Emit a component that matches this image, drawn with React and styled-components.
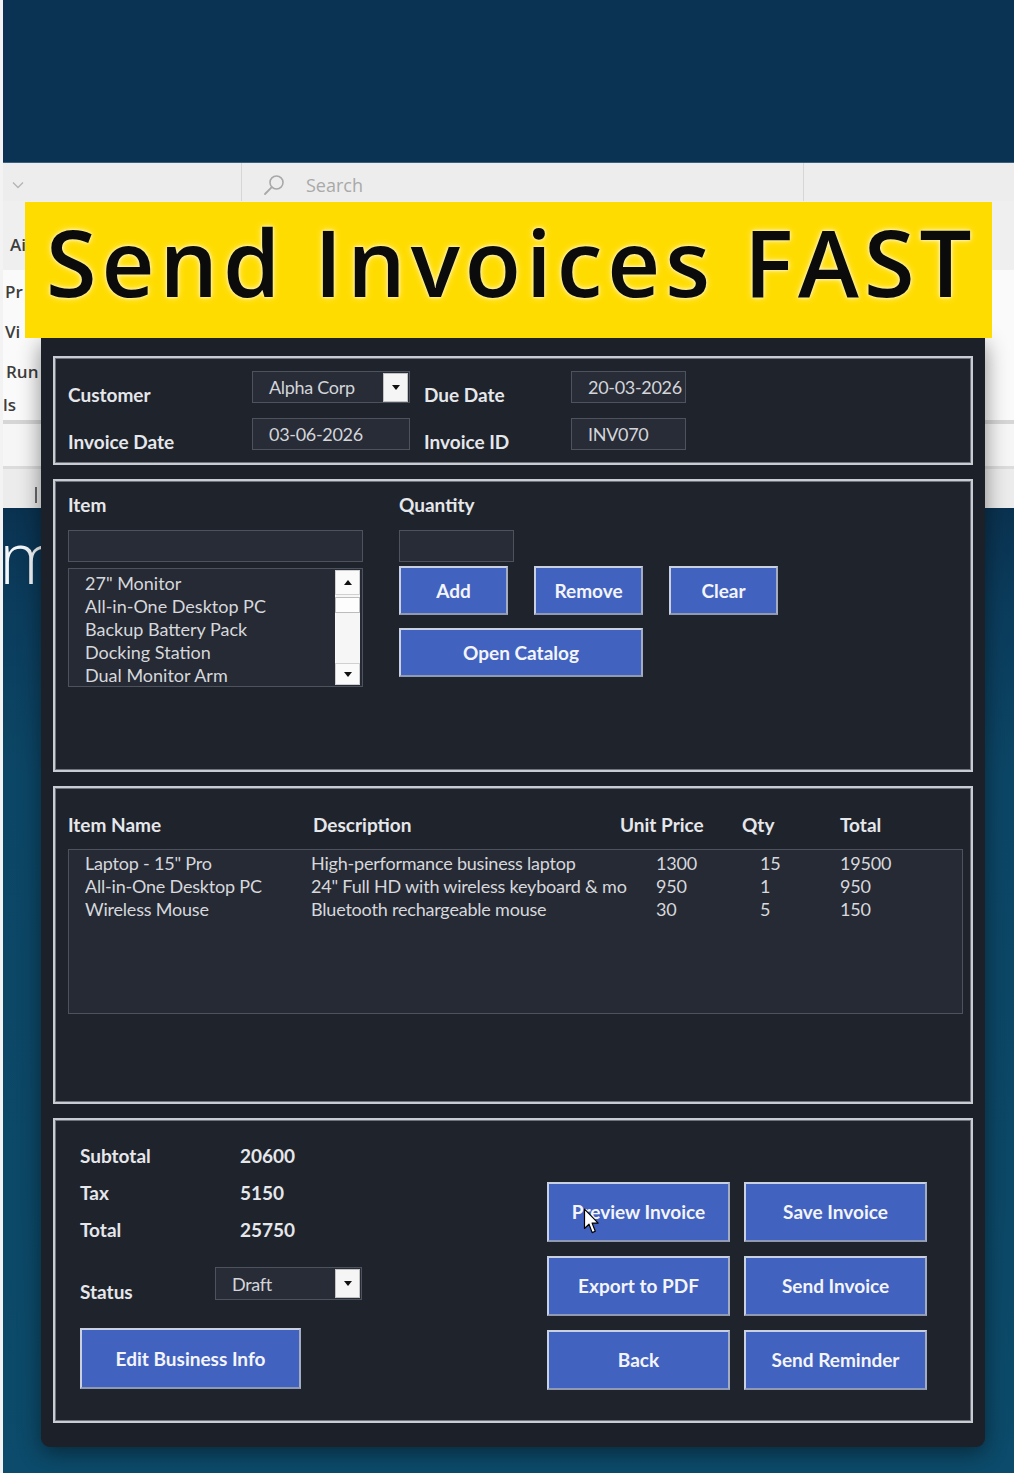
import React from "react";
import styled, { createGlobalStyle } from "styled-components";

const GlobalStyle = createGlobalStyle`
  html, body { margin: 0; padding: 0; background: #0a3252; }
  body { font-family: "Lato", "Open Sans", sans-serif; }
  *, *::before, *::after { box-sizing: border-box; }
`;

/* ---------- desktop backdrop ---------- */

const Screen = styled.div`
  width: 1014px;
  height: 1473px;
  overflow: hidden;
  display: flex;
  flex-direction: column;
  border-left: 3px solid #f3f3f3;
  background: #0b3a5a;
`;

const TopBand = styled.div`
  flex: none;
  height: 163px;
  background: #0a3252;
  border-bottom: 1px solid #3a6080;
`;

const Desk = styled.div`
  position: relative;
  flex: 1;
  display: flex;
  flex-direction: column;
`;

const Toolbar = styled.div`
  flex: none;
  height: 38px;
  display: flex;
  background: #ededed;
`;

const ToolCell = styled.div`
  flex: ${(p) => (p.$w ? "none" : "1")};
  width: ${(p) => (p.$w ? `${p.$w}px` : "auto")};
  display: flex;
  align-items: center;
  gap: 21px;
  padding: 5px 0 0 ${(p) => p.$pad || 0}px;
  border-right: ${(p) => (p.$w ? "1px solid #d6d6d6" : "none")};
`;

const SearchText = styled.span`
  font: 400 18px "Open Sans", sans-serif;
  color: #a9a9a9;
`;

const Band = styled.div`
  flex: none;
  height: ${(p) => p.$h}px;
  background: ${(p) => p.$bg};
  display: flex;
  flex-direction: column;
  align-items: flex-start;
`;

const RibbonLabel = styled.span`
  display: block;
  margin-top: ${(p) => p.$gap || 0}px;
  margin-left: ${(p) => p.$x || 0}px;
  font: 600 17px/22px "Open Sans", sans-serif;
  color: #3d3d3d;
`;

const Tick = styled.span`
  display: block;
  width: 2px;
  height: 16px;
  background: #6a6a6a;
  margin: 18px 0 0 32px;
`;

const Harbor = styled.div`
  flex: 1;
  background: linear-gradient(
    180deg,
    #0a3250 0%,
    #0b3c5c 10%,
    #0c4666 28%,
    #0c4867 70%,
    #0c4b6b 100%
  );
`;

const BigGlyph = styled.span`
  display: block;
  margin: 12px 0 0 -4px;
  font: 300 72px/72px "Open Sans", sans-serif;
  color: #f4f6f8;
`;

/* ---------- headline ribbon ---------- */

const Banner = styled.div`
  position: absolute;
  left: 22px;
  top: 39px;
  width: 967px;
  height: 136px;
  z-index: 3;
  background: #ffdc00;
  padding: 14px 0 0 21px;
  font: 600 92px/92px "Open Sans", sans-serif;
  letter-spacing: 5px;
  color: #0b0b0b;
  white-space: nowrap;
  text-shadow: 0 0 6px #fff6b8, 0 0 3px #fffbe0;
`;

/* ---------- invoice window ---------- */

const AppWindow = styled.div`
  position: absolute;
  left: 38px;
  top: 175px;
  width: 944px;
  height: 1109px;
  z-index: 2;
  background: #1c2029;
  border-radius: 0 0 9px 9px;
  box-shadow: 0 6px 22px rgba(0, 0, 0, 0.45);
  padding: 18px 12px 0 12px;
  display: flex;
  flex-direction: column;
  gap: 14px;
`;

const Panel = styled.section`
  flex: none;
  height: ${(p) => p.$h}px;
  border: 2px solid #c9cdd3;
  box-shadow: inset 0 0 0 1px #6e737c;
  background: #1f232c;
  padding: ${(p) => p.$pad};
`;

const HeaderGrid = styled.div`
  display: grid;
  grid-template-columns: 184px 172px 147px 115px;
  grid-template-rows: 32px 32px;
  row-gap: 15px;
`;

const FieldLabel = styled.span`
  align-self: end;
  margin-bottom: -3px;
  font: 700 19px/22px "Lato", sans-serif;
  color: #e5e7eb;
  white-space: nowrap;
`;

const Field = styled.div`
  width: ${(p) => p.$w}px;
  height: ${(p) => p.$h || 32}px;
  margin-top: ${(p) => p.$mt || 0}px;
  display: flex;
  align-items: center;
  justify-content: space-between;
  border: 1px solid #4d525d;
  background: #282c37;
  padding-left: 16px;
  font: 400 18px/22px "Lato", sans-serif;
  letter-spacing: -0.3px;
  color: #d3d5da;
  white-space: nowrap;
  overflow: hidden;
`;

const DropBtn = styled.span`
  width: 25px;
  height: 29px;
  margin-right: 1px;
  flex: none;
  display: flex;
  align-items: center;
  justify-content: center;
  background: #f5f5f5;
  border: 1px solid #c2c2c2;

  &::after {
    content: "";
    border-left: 4px solid transparent;
    border-right: 4px solid transparent;
    border-top: 5px solid #111;
  }
`;

const EntryArea = styled.div`
  display: flex;
  gap: 36px;
`;

const EntryCol = styled.div`
  display: flex;
  flex-direction: column;
  align-items: flex-start;
  width: ${(p) => (p.$w ? `${p.$w}px` : "auto")};
`;

const SectionLabel = styled.span`
  font: 700 19px/22px "Lato", sans-serif;
  color: #e5e7eb;
  white-space: nowrap;
`;

const ListBox = styled.div`
  margin-top: 6px;
  width: 295px;
  height: 119px;
  border: 1px solid #4d525d;
  background: #262a34;
  display: flex;
`;

const ListItems = styled.div`
  flex: 1;
  padding: 3px 0 0 16px;
  font: 400 18px/23px "Lato", sans-serif;
  color: #d6d8dc;
  overflow: hidden;
  white-space: nowrap;
`;

const ScrollBar = styled.div`
  flex: none;
  width: 25px;
  margin: 1px 2px 1px 0;
  display: flex;
  flex-direction: column;
  background: #f6f6f6;
`;

const ScrollArrow = styled.span`
  flex: none;
  height: ${(p) => p.$h}px;
  display: flex;
  align-items: center;
  justify-content: center;
  background: #fafafa;
  border: 1px solid #d0d0d0;

  &::after {
    content: "";
    border-left: 4px solid transparent;
    border-right: 4px solid transparent;
    ${(p) =>
      p.$up ? "border-bottom: 5px solid #111;" : "border-top: 5px solid #111;"}
  }
`;

const ScrollThumb = styled.span`
  flex: none;
  height: 16px;
  margin-top: 2px;
  background: #fdfdfd;
  border: 1px solid #bcbcbc;
`;

const ScrollTrack = styled.span`
  flex: 1;
`;

const ButtonRow = styled.div`
  display: flex;
  gap: ${(p) => p.$gap || 26}px;
  margin-top: ${(p) => p.$mt || 0}px;
`;

const ActionButton = styled.button`
  position: relative;
  width: ${(p) => p.$w}px;
  height: ${(p) => p.$h}px;
  margin-top: ${(p) => p.$mt || 0}px;
  padding: 0;
  background: #4262c0;
  border: 2px solid #c9d0e2;
  border-right-color: #a4acc2;
  border-bottom-color: #9099b2;
  color: #f3f5fb;
  font: 700 19px/22px "Lato", sans-serif;
  white-space: nowrap;
  cursor: default;
`;

const Pointer = styled.svg`
  position: absolute;
  left: 34px;
  top: 24px;
`;

const ColumnHeads = styled.div`
  display: grid;
  grid-template-columns: 245px 307px 122px 98px 1fr;
`;

const HeadCell = styled.span`
  font: 700 19px/22px "Lato", sans-serif;
  color: #e5e7eb;
  white-space: nowrap;
`;

const GridBox = styled.div`
  margin-top: 13px;
  width: 895px;
  height: 165px;
  border: 1px solid #4d525d;
  background: #262a35;
  padding: 2px 0 0 16px;
`;

const DataRow = styled.div`
  display: grid;
  grid-template-columns: 226px 345px 104px 80px 1fr;
  height: 23px;
`;

const DataCell = styled.span`
  font: 400 18px/23px "Lato", sans-serif;
  letter-spacing: -0.2px;
  color: #d6d8dc;
  white-space: nowrap;
  overflow: hidden;
`;

const SummaryLayout = styled.div`
  display: flex;
  align-items: flex-start;
`;

const SummaryCol = styled.div`
  flex: none;
  width: 467px;
  display: flex;
  flex-direction: column;
  align-items: flex-start;
`;

const SumRow = styled.div`
  display: grid;
  grid-template-columns: 160px auto;
  height: 37px;
  align-items: center;
`;

const SumText = styled.span`
  font: 700 19px/22px "Lato", sans-serif;
  color: #e5e7eb;
`;

const StatusRow = styled.div`
  margin-top: 19px;
  display: grid;
  grid-template-columns: 135px auto;
  height: 33px;
`;

const ActionGrid = styled.div`
  margin-top: 45px;
  display: grid;
  grid-template-columns: repeat(2, 183px);
  grid-auto-rows: 60px;
  gap: 14px;
`;

/* ---------- data ---------- */

const catalog = [
  '27" Monitor',
  "All-in-One Desktop PC",
  "Backup Battery Pack",
  "Docking Station",
  "Dual Monitor Arm",
];

const lines = [
  ['Laptop - 15" Pro', "High-performance business laptop", "1300", "15", "19500"],
  ["All-in-One Desktop PC", '24" Full HD with wireless keyboard & mo', "950", "1", "950"],
  ["Wireless Mouse", "Bluetooth rechargeable mouse", "30", "5", "150"],
];

const totals = [
  ["Subtotal", "20600"],
  ["Tax", "5150"],
  ["Total", "25750"],
];

const actions = [
  "Preview Invoice",
  "Save Invoice",
  "Export to PDF",
  "Send Invoice",
  "Back",
  "Send Reminder",
];

/* ---------- icons ---------- */

const Chevron = () => (
  <svg width="12" height="8" viewBox="0 0 12 8">
    <polyline points="1,1.5 6,6.5 11,1.5" fill="none" stroke="#b5b5b5" strokeWidth="1.4" />
  </svg>
);

const Magnifier = () => (
  <svg width="22" height="22" viewBox="0 0 22 22">
    <circle cx="13.5" cy="8.5" r="6.5" fill="none" stroke="#a8a8a8" strokeWidth="1.6" />
    <line x1="8.8" y1="13.2" x2="2" y2="20" stroke="#a8a8a8" strokeWidth="1.8" strokeLinecap="round" />
  </svg>
);

const ArrowCursor = () => (
  <Pointer width="17" height="27" viewBox="0 0 17 27">
    <path
      d="M1.5 1.2 L1.5 20.5 L6 16.2 L9.2 24.6 L12.3 23.3 L9.1 15.1 L15.2 15.1 Z"
      fill="#ffffff"
      stroke="#000000"
      strokeWidth="1.2"
      strokeLinejoin="round"
    />
  </Pointer>
);

/* ---------- page ---------- */

export default function App() {
  return (
    <>
      <GlobalStyle />
      <Screen>
        <TopBand />
        <Desk>
          <Toolbar>
            <ToolCell $w={239} $pad={9}>
              <Chevron />
            </ToolCell>
            <ToolCell $w={562} $pad={21}>
              <Magnifier />
              <SearchText>Search</SearchText>
            </ToolCell>
            <ToolCell />
          </Toolbar>
          <Band $h={69} $bg="#efefef">
            <RibbonLabel $gap={33} $x={7}>Ai</RibbonLabel>
          </Band>
          <Band $h={150} $bg="#fafafa">
            <RibbonLabel $gap={11} $x={2}>Pr</RibbonLabel>
            <RibbonLabel $gap={18} $x={2}>Vi</RibbonLabel>
            <RibbonLabel $gap={18} $x={3}>Run</RibbonLabel>
            <RibbonLabel $gap={11} $x={0}>ls</RibbonLabel>
          </Band>
          <Band $h={4} $bg="#d6d6d6" />
          <Band $h={42} $bg="#f6f6f6" />
          <Band $h={3} $bg="#dcdcdc" />
          <Band $h={39} $bg="#ececec">
            <Tick />
          </Band>
          <Harbor>
            <BigGlyph>m</BigGlyph>
          </Harbor>

          <Banner>Send Invoices FAST</Banner>

          <AppWindow>
            <Panel $h={109} $pad="13px 0 0 13px">
              <HeaderGrid>
                <FieldLabel>Customer</FieldLabel>
                <Field $w={158}>
                  Alpha Corp
                  <DropBtn />
                </Field>
                <FieldLabel>Due Date</FieldLabel>
                <Field $w={115}>20-03-2026</Field>
                <FieldLabel>Invoice Date</FieldLabel>
                <Field $w={158}>03-06-2026</Field>
                <FieldLabel>Invoice ID</FieldLabel>
                <Field $w={115}>INV070</Field>
              </HeaderGrid>
            </Panel>

            <Panel $h={293} $pad="13px 0 0 13px">
              <EntryArea>
                <EntryCol $w={295}>
                  <SectionLabel>Item</SectionLabel>
                  <Field $w={295} $mt={14} />
                  <ListBox>
                    <ListItems>
                      {catalog.map((name) => (
                        <div key={name}>{name}</div>
                      ))}
                    </ListItems>
                    <ScrollBar>
                      <ScrollArrow $h={25} $up />
                      <ScrollThumb />
                      <ScrollTrack />
                      <ScrollArrow $h={22} />
                    </ScrollBar>
                  </ListBox>
                </EntryCol>
                <EntryCol>
                  <SectionLabel>Quantity</SectionLabel>
                  <Field $w={115} $mt={14} />
                  <ButtonRow $mt={4}>
                    <ActionButton $w={109} $h={49}>Add</ActionButton>
                    <ActionButton $w={109} $h={49}>Remove</ActionButton>
                    <ActionButton $w={109} $h={49}>Clear</ActionButton>
                  </ButtonRow>
                  <ActionButton $w={244} $h={49} $mt={13}>
                    Open Catalog
                  </ActionButton>
                </EntryCol>
              </EntryArea>
            </Panel>

            <Panel $h={318} $pad="26px 0 0 13px">
              <ColumnHeads>
                <HeadCell>Item Name</HeadCell>
                <HeadCell>Description</HeadCell>
                <HeadCell>Unit Price</HeadCell>
                <HeadCell>Qty</HeadCell>
                <HeadCell>Total</HeadCell>
              </ColumnHeads>
              <GridBox>
                {lines.map((row) => (
                  <DataRow key={row[0]}>
                    {row.map((cell, i) => (
                      <DataCell key={i}>{cell}</DataCell>
                    ))}
                  </DataRow>
                ))}
              </GridBox>
            </Panel>

            <Panel $h={305} $pad="17px 0 0 25px">
              <SummaryLayout>
                <SummaryCol>
                  {totals.map(([label, value]) => (
                    <SumRow key={label}>
                      <SumText>{label}</SumText>
                      <SumText>{value}</SumText>
                    </SumRow>
                  ))}
                  <StatusRow>
                    <FieldLabel>Status</FieldLabel>
                    <Field $w={147} $h={33}>
                      Draft
                      <DropBtn />
                    </Field>
                  </StatusRow>
                  <ActionButton $w={221} $h={61} $mt={28}>
                    Edit Business Info
                  </ActionButton>
                </SummaryCol>
                <ActionGrid>
                  {actions.map((label, i) => (
                    <ActionButton key={label} $w={183} $h={60}>
                      {label}
                      {i === 0 && <ArrowCursor />}
                    </ActionButton>
                  ))}
                </ActionGrid>
              </SummaryLayout>
            </Panel>
          </AppWindow>
        </Desk>
      </Screen>
    </>
  );
}
